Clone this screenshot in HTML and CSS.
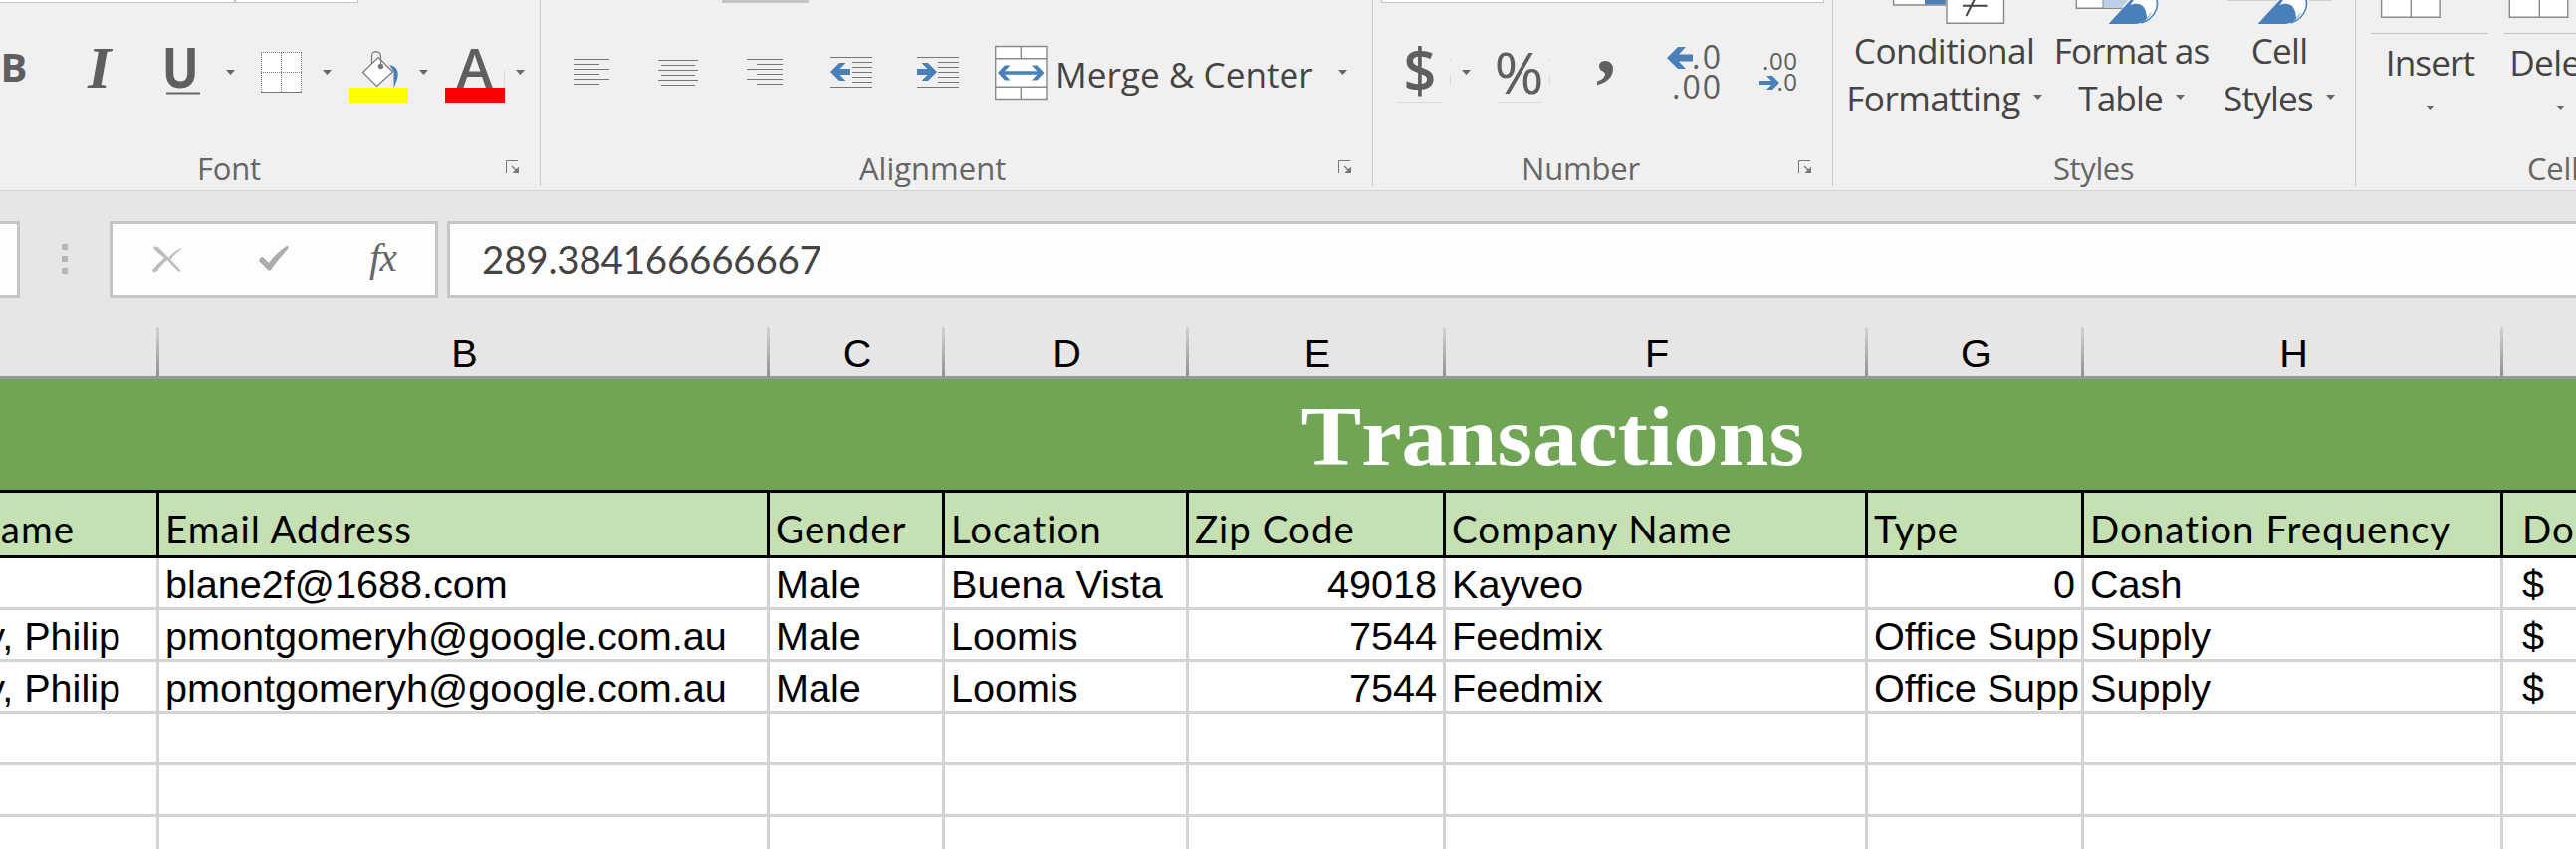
FILE: index.html
```html
<!DOCTYPE html>
<html lang="en">
<head>
<meta charset="utf-8">
<title>Transactions</title>
<link rel="stylesheet" href="styles.css">
</head>
<body>
<svg class="defs" width="0" height="0" aria-hidden="true">
  <defs>
    <path id="caret" d="M0 0h9L4.5 5z" fill="#666"/>
    <g id="launcher">
      <path d="M.5 13V.5H12" fill="none" stroke="#777"/>
      <path d="M6 6l5 5" stroke="#777" stroke-width="1.2"/>
      <path d="M13 6.500V13H6.500z" fill="#777"/>
    </g>
    <g id="brush">
      <path d="M19 0C24 -6 48 -8 49.500 3C50 14 41 24 28 24L22 2z" fill="#fff"/>
      <path d="M48 -2C52 10 43 20 33 23" fill="none" stroke="#4a80b9" stroke-width="1.600"/>
      <path d="M0 24L23 -1L26 -1L22 5C32 1 38 6 38.500 18C42 14 44 11 44 11C40 20 33 24 27 24z" fill="#4a80b9"/>
    </g>
  </defs>
</svg>
<div class="app">
  <header class="ribbon">
    <section class="group group-font">
      <div class="fields"><span class="field field-name"></span><span class="field field-size"></span></div>
      <div class="tools">
        <svg width="60" height="60" viewBox="0 45 60 60"><text class="ui bold" x="0.500" y="82" font-size="40">B</text></svg>
        <svg width="80" height="60" viewBox="60 45 80 60"><text class="serif bold-italic" x="88" y="88" font-size="60">I</text></svg>
        <svg width="105" height="60" viewBox="140 45 105 60"><text class="ui bold" transform="translate(162.500 88) scale(.9 1)" font-size="55">U</text><path d="M167 93.500H201" stroke="#666" stroke-width="2"/><use href="#caret" x="227" y="70"/></svg>
        <svg width="95" height="60" viewBox="245 45 95 60"><path d="M262 52h41v41h-41z" fill="#fff"/><path d="M262 52.500h41M262 72.500h41M262.500 53v40M282.500 53v40M302.500 53v40" stroke="#777" stroke-dasharray="1 1"/><path d="M262 92.500h41" stroke="#777"/><use href="#caret" x="324" y="70"/></svg>
        <svg width="95" height="60" viewBox="340 45 95 60"><path d="M391 65C399 66 402 73 398 82L395.500 88V72z" fill="#4a80b9"/><path d="M380 57.500L394.500 72L378.500 86.500L364.500 72.500z" fill="#fff" stroke="#777" stroke-width="1.200"/><path d="M373.500 64V56C373.500 50 382.500 50 382.500 57V66" fill="none" stroke="#777" stroke-width="1.200"/><circle cx="382.500" cy="66.500" r="2.700" fill="#777"/><path d="M350 88h60v15h-60z" fill="#ff0"/><use href="#caret" x="421" y="70"/></svg>
        <svg width="100" height="60" viewBox="435 45 100 60"><text class="ui semi" x="458.500" y="88" font-size="55">A</text><path d="M447 88h60v15h-60z" fill="#f00"/><path d="M506.500 70v17" stroke="#cfdcea"/><use href="#caret" x="518" y="70"/></svg>
      </div>
      <div class="foot"><span class="foot-label">Font</span><svg class="launch" width="14" height="14"><use href="#launcher"/></svg></div>
    </section>

    <section class="group group-align">
      <div class="fields"><span class="pressed"></span></div>
      <div class="tools">
        <svg width="97" height="60" viewBox="543 45 97 60"><path d="M576 59.500h36M576 64.500h26M576 69.500h36M576 74.500h26M576 79.500h36M576 84.500h26" stroke="#777"/></svg>
        <svg width="90" height="60" viewBox="640 45 90 60"><path d="M661 60.500h40M664 65.500h34M661 70.500h40M664 75.500h34M661 80.500h40M664 85.500h34" stroke="#777"/></svg>
        <svg width="80" height="60" viewBox="730 45 80 60"><path d="M750 59.500h36M760 64.500h26M750 69.500h36M760 74.500h26M750 79.500h36M760 84.500h26" stroke="#777"/></svg>
        <svg width="90" height="60" viewBox="810 45 90 60"><path d="M834 57.500h42M856 62.500h20M856 67.500h20M856 72.500h20M856 77.500h20M856 82.500h20M834 87.500h42" stroke="#777"/><path d="M834 72l9-9h6.500l-6 6H854v6h-10.500l6 6H843z" fill="#4a80b9"/></svg>
        <svg width="90" height="60" viewBox="900 45 90 60"><path d="M921 57.500h42M942 62.500h21M942 67.500h21M942 72.500h21M942 77.500h21M942 82.500h21M921 87.500h42" stroke="#777"/><path d="M941 72l-9-9h-6.500l6 6H921v6h10.500l-6 6H932z" fill="#4a80b9"/></svg>
        <svg width="70" height="60" viewBox="990 45 70 60"><path d="M999.700 46.500h51.300v53h-51.300z" fill="#fff" stroke="#8a8a8a" stroke-width="1.400"/><path d="M1000 58.700h51M1000 87.300h51M1025.300 47v12M1025.300 87v12" stroke="#8a8a8a" stroke-width="1.400"/><path d="M1005 73H1046" stroke="#4a80b9" stroke-width="3.400"/><path d="M1002 73l7-7.500h5.500L1007.500 73l7 7.500H1009zM1048.500 73l-7-7.500H1036L1043 73l-7 7.500h5.500z" fill="#4a80b9"/></svg>
        <span class="merge-label">Merge &amp; Center</span>
        <svg class="merge-caret" width="9" height="5"><use href="#caret"/></svg>
      </div>
      <div class="foot"><span class="foot-label">Alignment</span><svg class="launch" width="14" height="14"><use href="#launcher"/></svg></div>
    </section>

    <section class="group group-number">
      <div class="fields"><span class="field field-format"></span></div>
      <div class="tools">
        <svg width="111" height="60" viewBox="1379 45 111 60"><text class="ui semi" transform="translate(1409.500 93) scale(.93 1)" font-size="62">$</text><path d="M1403 102.500h45" stroke="#d8d8d8"/><path d="M1456.500 59v2M1456.500 75v10" stroke="#cfdcea"/><use href="#caret" x="1468" y="70"/></svg>
        <svg width="90" height="60" viewBox="1490 45 90 60"><text class="ui" x="1500.500" y="93.500" font-size="57" textLength="50" lengthAdjust="spacingAndGlyphs">%</text><path d="M1503 102.500h45" stroke="#d8d8d8"/><path d="M1556.500 59v2M1556.500 75v10" stroke="#cfdcea"/></svg>
        <svg width="70" height="60" viewBox="1580 45 70 60"><text class="serif bold" x="1603" y="73" font-size="80">,</text></svg>
        <svg width="100" height="60" viewBox="1650 45 100 60"><path d="M1674 58l11-11h8l-7 7.500h14v7h-14l7 7.500h-8z" fill="#4a80b9"/><text class="ui" x="1699" y="69" font-size="32" textLength="29">.0</text><text class="ui" x="1679" y="98.500" font-size="32" textLength="49">.00</text></svg>
        <svg width="80" height="60" viewBox="1750 45 80 60"><text class="ui" x="1770" y="70" font-size="24" textLength="35">.00</text><text class="ui" x="1784.500" y="90.500" font-size="24" textLength="20.500">.0</text><path d="M1787 83l-7-7h-6l5 5H1767v4h12l-5 5h6z" fill="#4a80b9"/></svg>
      </div>
      <div class="foot"><span class="foot-label">Number</span><svg class="launch" width="14" height="14"><use href="#launcher"/></svg></div>
    </section>

    <section class="group group-styles">
      <div class="commands">
        <div class="cmd cmd-conditional">
          <svg width="223" height="24" viewBox="1841 0 223 24"><path d="M1901.600 -3V5h52V-3" fill="#fff" stroke="#8a8a8a" stroke-width="1.400"/><path d="M1933 0h20v4.500h-20z" fill="#4a80b9"/><path d="M1955 -3V23.300h57.500V-3" fill="#fff" stroke="#8a8a8a" stroke-width="1.400"/><path d="M1971 5.700h24.500M1974.500 16L1984 -3" fill="none" stroke="#444" stroke-width="2"/></svg>
          <span>Conditional</span>
          <span>Formatting<svg class="caret" width="9" height="5"><use href="#caret"/></svg></span>
        </div>
        <div class="cmd cmd-table">
          <svg width="153" height="24" viewBox="2064 0 153 24"><path d="M2085.300 -3V8.300H2140V-3" fill="#fff" stroke="#8a8a8a" stroke-width="1.400"/><path d="M2112 0h26l-7 7.600h-19z" fill="#bdd0e8"/><path d="M2112 0v8" stroke="#8a8a8a"/><path d="M2127 13L2140 -1h6v14z" fill="#f0f0f0"/><use href="#brush" x="2117.500"/></svg>
          <span>Format as</span>
          <span>Table<svg class="caret" width="9" height="5"><use href="#caret"/></svg></span>
        </div>
        <div class="cmd cmd-cell">
          <svg width="144" height="24" viewBox="2217 0 144 24"><path d="M2237 .5h50M2319 .5h23" stroke="#d0d0d0"/><use href="#brush" x="2267.500"/></svg>
          <span>Cell</span>
          <span>Styles<svg class="caret" width="9" height="5"><use href="#caret"/></svg></span>
        </div>
      </div>
      <div class="foot"><span class="foot-label">Styles</span></div>
    </section>

    <section class="group group-cells">
      <div class="commands">
        <div class="cmd cmd-insert">
          <svg width="149" height="36" viewBox="2366 0 149 36"><path d="M2391.600 -3V17.300h58.500V-3M2421.300 0v17" fill="#fff" stroke="#8a8a8a" stroke-width="1.400"/><path d="M2381 33.500h118" stroke="#c5c5c5"/></svg>
          <span>Insert</span>
          <svg class="caret-below" width="9" height="5"><use href="#caret"/></svg>
        </div>
        <div class="cmd cmd-delete">
          <svg width="113" height="36" viewBox="2515 0 113 36"><path d="M2520.300 -3V17.300h58.500V-3M2550.300 0v17" fill="#fff" stroke="#8a8a8a" stroke-width="1.400"/><path d="M2513 33.500h118" stroke="#c5c5c5"/></svg>
          <span>Delete</span>
          <svg class="caret-below" width="9" height="5"><use href="#caret"/></svg>
        </div>
      </div>
      <div class="foot"><span class="foot-label">Cells</span></div>
    </section>
  </header>

  <div class="formula-bar">
    <div class="name-box"></div>
    <div class="grip"><i></i><i></i><i></i></div>
    <div class="formula-actions">
      <svg width="324" height="71" viewBox="113 225 324 71">
        <path d="M154 249Q156 246 160 249L182 272L180 273Q176 270 168 261Q161 267 158 272Q154 275 153 271Q158 265 165 259Q158 254 154 249zM169 259Q175 252 182 249L181 251Q175 255 171 261z" fill="#bdbdbd"/>
        <path d="M260 262Q262 256 265 259L270 264Q278 253 288 247Q291 247 289 250Q279 261 272 271Q270 273 268 270z" fill="#adadad"/>
        <text class="serif fx" x="371" y="271.500" font-size="41">f</text><text class="serif fx" x="381.500" y="271.500" font-size="39">x</text>
      </svg>
    </div>
    <div class="formula-input">289.384166666667</div>
  </div>

  <div class="sheet">
    <div class="row letters"><div></div><div>B</div><div>C</div><div>D</div><div>E</div><div>F</div><div>G</div><div>H</div><div></div></div>
    <div class="title"><h1>Transactions</h1></div>
    <div class="row heads"><div class="first">Name</div><div>Email Address</div><div>Gender</div><div>Location</div><div>Zip Code</div><div>Company Name</div><div>Type</div><div>Donation Frequency</div><div class="last">Donation</div></div>
    <div class="row"><div class="first"></div><div>blane2f@1688.com</div><div>Male</div><div>Buena Vista</div><div class="num">49018</div><div>Kayveo</div><div class="num">0</div><div>Cash</div><div class="last">$</div></div>
    <div class="row"><div class="first">y, Philip</div><div>pmontgomeryh@google.com.au</div><div>Male</div><div>Loomis</div><div class="num">7544</div><div>Feedmix</div><div>Office Supp</div><div>Supply</div><div class="last">$</div></div>
    <div class="row"><div class="first">y, Philip</div><div>pmontgomeryh@google.com.au</div><div>Male</div><div>Loomis</div><div class="num">7544</div><div>Feedmix</div><div>Office Supp</div><div>Supply</div><div class="last">$</div></div>
    <div class="row"><div></div><div></div><div></div><div></div><div></div><div></div><div></div><div></div><div></div></div>
    <div class="row"><div></div><div></div><div></div><div></div><div></div><div></div><div></div><div></div><div></div></div>
    <div class="row"><div></div><div></div><div></div><div></div><div></div><div></div><div></div><div></div><div></div></div>
  </div>
</div>
</body>
</html>
```
FILE: styles.css
```css
* { box-sizing: border-box; }
body { margin: 0; background: #fff; }
svg { display: block; flex: none; }
.defs { position: absolute; }
.app {
  width: 2587px;
  height: 853px;
  overflow: hidden;
  background: #e6e6e6;
  font-family: "Open Sans", "Noto Sans", sans-serif;
}

/* Ribbon */
.ribbon {
  display: flex;
  height: 192px;
  background: #f0f0f0;
  border-bottom: 1px solid #d4d4d4;
}
.group {
  flex: none;
  display: flex;
  flex-direction: column;
  height: 187px;
  border-right: 1px solid #cbcbcb;
}
.group-font { width: 543px; }
.group-align { width: 836px; }
.group-number { width: 462px; }
.group-styles { width: 525px; }
.group-cells { width: 221px; border-right: 0; overflow: hidden; }

.fields { display: flex; height: 45px; }
.field {
  height: 3px;
  background: #fff;
  border: 1px solid #c3c3c3;
  border-top: 0;
}
.field-name { width: 236px; border-left: 0; }
.field-size { width: 124px; }
.field-format { width: 445px; margin-left: 8px; }
.pressed { width: 87px; height: 3px; margin-left: 182px; background: #c5c5c5; }

.tools { display: flex; height: 103px; }
.tools svg { overflow: visible; }
.tools text { fill: #5f5f5f; }
.ui { font-family: "Open Sans", sans-serif; }
.serif { font-family: "Liberation Serif", serif; }
.bold { font-weight: 700; }
.semi { font-weight: 600; }
.bold-italic { font-weight: 700; font-style: italic; }
.fx { font-style: italic; fill: #666; }

.merge-label {
  width: 284px;
  line-height: 48px;
  margin-top: 5px;
  font-size: 35.2px;
  color: #444;
  white-space: nowrap;
  height: 48px;
}
.merge-caret { margin-top: 25px; }

.commands { display: flex; height: 148px; }
.cmd {
  flex: none;
  display: flex;
  flex-direction: column;
  align-items: center;
  font-size: 35.2px;
  line-height: 48px;
  letter-spacing: -.6px;
  color: #444;
  white-space: nowrap;
}
.cmd > span { display: flex; align-items: center; }
.cmd > svg:first-child { margin-bottom: 2px; }
.cmd-conditional { width: 223px; }
.cmd-table { width: 153px; letter-spacing: -.9px; }
.cmd-cell { width: 144px; letter-spacing: -.8px; }
.cmd-insert { width: 149px; letter-spacing: -.9px; }
.cmd-delete { width: 113px; }
.caret { margin: -2px 0 0 13px; }
.caret-below { margin-top: 20px; }

.foot {
  display: flex;
  height: 39px;
  font-size: 31px;
  line-height: 42px;
  letter-spacing: -.2px;
  color: #666;
}
.group-font .foot-label { margin-left: 198px; }
.group-align .foot-label { margin-left: 320px; letter-spacing: 0; }
.group-number .foot-label { margin-left: 149px; }
.group-styles .foot-label { margin-left: 221px; letter-spacing: -.4px; }
.group-cells .foot-label { margin-left: 172px; }
.launch { margin: 13px 20px 0 auto; }

/* Formula bar */
.formula-bar { display: flex; height: 137px; padding-top: 30px; }
.name-box, .formula-actions, .formula-input {
  flex: none;
  height: 77px;
  background: #fdfdfd;
  border: 3px solid #c5c5c5;
}
.name-box { width: 20px; border-left: 0; }
.grip {
  display: flex;
  flex-direction: column;
  gap: 6px;
  width: 6px;
  margin: 23px 42px 0;
}
.grip i { height: 6px; background: #b5b5b5; }
.formula-actions { width: 330px; }
.formula-input {
  flex: 1;
  margin-left: 9px;
  padding-left: 32px;
  border-right: 0;
  font: 38.5px/71px Lato, sans-serif;
  letter-spacing: -.2px;
  color: #444;
}

/* Sheet */
.sheet { font-family: "Liberation Sans", Arial, sans-serif; font-size: 39.6px; color: #000; }
.row {
  display: grid;
  grid-template-columns: 160px 613px 176px 245px 258px 424px 217px 421px 73px;
  height: 52px;
  background: #fff;
}
.row > div {
  display: block;
  height: 52px;
  padding: 0 6px;
  line-height: 52px;
  border-right: 3px solid #d4d4d4;
  border-bottom: 3px solid #d4d4d4;
  overflow: hidden;
  white-space: nowrap;
}
.row > div:last-child { border-right: 0; }
.row > .last { padding-left: 19px; }
.row > .num { text-align: right; }
.row > .first { display: flex; justify-content: flex-end; padding-right: 36px; }
.letters { background: #e6e6e6; }
.letters > div {
  text-align: center;
  border-bottom-color: #999;
  border-right: 0;
  background: linear-gradient(#d2d2d2, #929292) right / 3px 100% no-repeat;
}
.letters > div:last-child { background: none; }
.title {
  display: flex;
  justify-content: center;
  height: 114px;
  background: #71a556;
  border-bottom: 3px solid #000;
}
.title h1 {
  margin: 2px 0 0 532px;
  font: 700 85px/111px "Liberation Serif", serif;
  font-kerning: none;
  color: #fff;
  transform: scaleX(1.07);
}
.heads { height: 66px; background: #c5e0b3; font: 38.5px/46px Lato, sans-serif; letter-spacing: 1px; }
.heads > div {
  height: 66px;
  padding-top: 13px;
  line-height: 46px;
  border-color: #000;
}
.row.heads > .first { padding-right: 82px; }
```
